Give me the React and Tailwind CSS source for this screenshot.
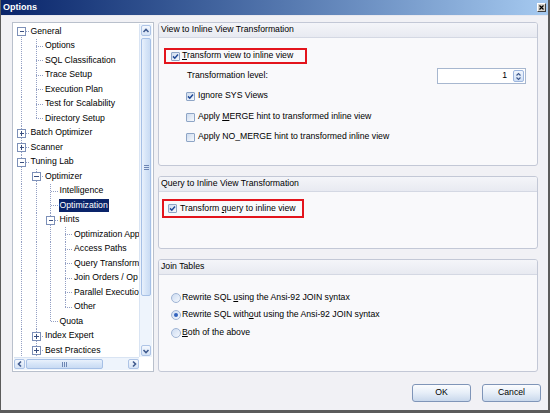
import React from 'react';

const FONT = "font-['Liberation_Sans',Arial,sans-serif]";

const leaf = (labels) => labels.map((label) => ({ label }));

const tree = [
  {
    label: 'General',
    open: true,
    children: leaf(['Options', 'SQL Classification', 'Trace Setup', 'Execution Plan', 'Test for Scalability', 'Directory Setup']),
  },
  { label: 'Batch Optimizer', closed: true },
  { label: 'Scanner', closed: true },
  {
    label: 'Tuning Lab',
    open: true,
    more: true,
    children: [
      {
        label: 'Optimizer',
        open: true,
        children: [
          { label: 'Intelligence' },
          { label: 'Optimization', selected: true },
          {
            label: 'Hints',
            open: true,
            children: leaf(['Optimization App', 'Access Paths', 'Query Transform', 'Join Orders / Op', 'Parallel Executio', 'Other']),
          },
          { label: 'Quota' },
        ],
      },
      { label: 'Index Expert', closed: true },
      { label: 'Best Practices', closed: true },
    ],
  },
];

function flatten(nodes, level, cont, more, out) {
  nodes.forEach((n, i) => {
    const last = i === nodes.length - 1 && !more;
    out.push({ ...n, level, cont, last, first: level === 0 && i === 0 });
    if (n.open) flatten(n.children, level + 1, [...cont, !last], n.more, out);
  });
  return out;
}

const rows = flatten(tree, 0, [], true, []);

const LINE = '#94a0c4';

function TreeRow({ r }) {
  const w = 15.5 + 14.5 * r.level;
  const cx = (i) => 7.5 + 14.5 * i;
  const mid = 7.25;
  const x = cx(r.level);
  return (
    <div className="h-[14.5px] flex items-center whitespace-nowrap">
      <svg width={w} height="14.5" className="shrink-0" shapeRendering="crispEdges">
        {r.cont.map((c, i) =>
          c ? <line key={i} x1={cx(i)} y1="0" x2={cx(i)} y2="14.5" stroke={LINE} strokeDasharray="1 1" /> : null
        )}
        <line x1={x} y1={r.first ? mid : 0} x2={x} y2={r.last ? mid : 14.5} stroke={LINE} strokeDasharray="1 1" />
        <line x1={x} y1={mid} x2={w} y2={mid} stroke={LINE} strokeDasharray="1 1" />
        {(r.open || r.closed) && (
          <g>
            <rect x={x - 4} y={mid - 4} width="8" height="8" fill="#fff" stroke="#7d90b8" />
            <line x1={x - 2} y1={mid} x2={x + 2.5} y2={mid} stroke="#3a4f80" />
            {r.closed && <line x1={x} y1={mid - 2} x2={x} y2={mid + 2.5} stroke="#3a4f80" />}
          </g>
        )}
      </svg>
      <span className={`px-[1px] leading-[13px] ${r.selected ? 'bg-[#0a246a] text-white' : 'text-black'}`}>{r.label}</span>
    </div>
  );
}

function Arrow({ dir }) {
  const d = {
    up: 'M1.5 5 L4 2.5 L6.5 5',
    down: 'M1.5 3 L4 5.5 L6.5 3',
    left: 'M5 1.5 L2.5 4 L5 6.5',
    right: 'M3 1.5 L5.5 4 L3 6.5',
  }[dir];
  return (
    <svg width="8" height="8" viewBox="0 0 8 8">
      <path d={d} fill="none" stroke="#3f5a8e" strokeWidth="1.6" />
    </svg>
  );
}

const SBTN = 'border border-[#aec4e6] rounded-[2px] flex items-center justify-center';

function VScroll() {
  return (
    <div className="flex flex-col bg-[#eef4fc] border-l border-[#d9e4f3] px-[1px] py-[1px]">
      <div className={`${SBTN} h-[11px] bg-gradient-to-b from-[#f4f8fe] to-[#d5e3f6]`}>
        <Arrow dir="up" />
      </div>
      <div className="mt-[2px] h-[258px] rounded-[2px] border border-[#a6c0e6] bg-gradient-to-r from-[#e9f1fc] via-[#d6e5f8] to-[#c9dbf3] flex flex-col items-center justify-center gap-[1px]">
        <span className="w-[5px] h-[1px] bg-[#6d86b4]" />
        <span className="w-[5px] h-[1px] bg-[#6d86b4]" />
        <span className="w-[5px] h-[1px] bg-[#6d86b4]" />
      </div>
      <div className="flex-1" />
      <div className={`${SBTN} h-[11px] bg-gradient-to-b from-[#f4f8fe] to-[#d5e3f6]`}>
        <Arrow dir="down" />
      </div>
    </div>
  );
}

function HScroll() {
  return (
    <div className="flex bg-[#eef4fc] border-t border-[#d9e4f3] py-[1px]">
      <div className={`${SBTN} w-[11px] bg-gradient-to-b from-[#f4f8fe] to-[#d5e3f6]`}>
        <Arrow dir="left" />
      </div>
      <div className="ml-[1px] w-[77px] rounded-[2px] border border-[#a6c0e6] bg-gradient-to-b from-[#e9f1fc] via-[#d6e5f8] to-[#c9dbf3] flex items-center justify-center gap-[1px]">
        <span className="w-[1px] h-[5px] bg-[#6d86b4]" />
        <span className="w-[1px] h-[5px] bg-[#6d86b4]" />
        <span className="w-[1px] h-[5px] bg-[#6d86b4]" />
      </div>
      <div className="flex-1" />
      <div className={`${SBTN} w-[11px] bg-gradient-to-b from-[#f4f8fe] to-[#d5e3f6]`}>
        <Arrow dir="right" />
      </div>
    </div>
  );
}

function Check({ checked }) {
  return (
    <span className="w-[9px] h-[9px] shrink-0 border border-[#8ea5c6] rounded-[1px] bg-gradient-to-br from-[#cfdcee] to-[#f6f9fd] flex items-center justify-center">
      {checked && (
        <svg width="7" height="7" viewBox="0 0 7 7">
          <path d="M1 3.4 L2.8 5.2 L6 1.6" fill="none" stroke="#1f4896" strokeWidth="1.5" />
        </svg>
      )}
    </span>
  );
}

function Radio({ on }) {
  return (
    <span className="w-[10px] h-[10px] shrink-0 rounded-full border border-[#9fb4d4] bg-gradient-to-br from-[#cddcf1] to-[#f5f8fd] flex items-center justify-center">
      {on && <span className="w-[4px] h-[4px] rounded-full bg-[#3262bd]" />}
    </span>
  );
}

function Group({ title, className, children }) {
  return (
    <div className={`border border-[#c3c8d6] rounded-[3px] bg-[#f9f9fb] flex flex-col overflow-hidden ${className}`}>
      <div className="h-[15px] shrink-0 bg-gradient-to-b from-[#f4f5f9] to-[#e8eaf1] border-b border-[#d4d8e3] px-[2px] flex items-center">
        {title}
      </div>
      <div className="flex-1 flex flex-col">{children}</div>
    </div>
  );
}

function Button({ children }) {
  return (
    <div className="w-[59px] h-[18px] rounded-[3px] border border-[#7f95b8] bg-gradient-to-b from-[#fbfcfe] via-[#e6eef8] to-[#c9d8ec] flex items-center justify-center text-black">
      {children}
    </div>
  );
}

export default function App() {
  return (
    <div className={`${FONT} text-[8.7px] text-black w-[550px] h-[413px] bg-[#f1f1f5] border-l border-r-2 border-b-[3px] border-[#5b5b5b] flex flex-col overflow-hidden`}>
      <div className="h-[16px] shrink-0 bg-gradient-to-r from-[#0a246a] to-[#a6caf0] flex items-center pl-[2px] pr-[2px] border-b border-[#e9e9ef]">
        <span className="text-white font-bold text-[9px]">Options</span>
        <div className="ml-auto w-[9px] h-[9px] bg-[#d4d0c8] border border-t-white border-l-white border-r-[#404040] border-b-[#404040] flex items-center justify-center">
          <svg width="5" height="5" viewBox="0 0 5 5">
            <path d="M0.5 0.5 L4.5 4.5 M4.5 0.5 L0.5 4.5" stroke="#000" strokeWidth="1.2" />
          </svg>
        </div>
      </div>

      <div className="flex-1 flex flex-col pl-[11px] pr-[10px] pt-[6px]">
        <div className="h-[350px] flex gap-[4px]">
          <div className="w-[142px] h-full border border-[#b9c0cc] bg-white p-[1px] grid grid-cols-[1fr_13px] grid-rows-[1fr_13px]">
            <div className="overflow-hidden">
              {rows.map((r, i) => (
                <TreeRow key={i} r={r} />
              ))}
            </div>
            <VScroll />
            <HScroll />
            <div className="bg-white" />
          </div>

          <div className="flex-1 flex flex-col">
            <Group title="View to Inline View Transformation" className="h-[144px]">
              <div className="mt-[10px] ml-[5px] w-[143px] h-[16px] border-2 border-[#e3141c] flex items-center pl-[5px] gap-[2px]">
                <Check checked />
                <span>
                  <u>T</u>ransform view to inline view
                </span>
              </div>
              <div className="mt-[4px] h-[16px] pl-[28px] pr-[11px] flex items-center">
                <span>Transformation level:</span>
                <div className="ml-auto w-[89px] h-[16px] border border-[#a7b7cf] bg-white flex items-center">
                  <span className="flex-1 text-right pr-[6px]">1</span>
                  <div className="w-[11px] h-[12px] mr-[1px] rounded-[2px] border border-[#9db6de] bg-gradient-to-b from-[#f1f6fd] to-[#cfdff5] flex flex-col items-center justify-center">
                    <svg width="7" height="9" viewBox="0 0 7 9">
                      <path d="M1.5 3.5 L3.5 1.5 L5.5 3.5 M1.5 5.5 L3.5 7.5 L5.5 5.5" fill="none" stroke="#3f5a8e" strokeWidth="1.1" />
                    </svg>
                  </div>
                </div>
              </div>
              <div className="mt-[5px] h-[14px] pl-[27px] flex items-center gap-[3px]">
                <Check checked />
                <span>Ignore SYS Views</span>
              </div>
              <div className="mt-[7px] h-[14px] pl-[27px] flex items-center gap-[3px]">
                <Check />
                <span>
                  Apply <u>M</u>ERGE hint to transformed inline view
                </span>
              </div>
              <div className="mt-[6px] h-[14px] pl-[27px] flex items-center gap-[3px]">
                <Check />
                <span>Apply NO_MERGE hint to transformed inline view</span>
              </div>
            </Group>

            <Group title="Query to Inline View Transformation" className="mt-[10px] h-[73px]">
              <div className="mt-[7px] ml-[3px] w-[142px] h-[19px] border-2 border-[#e3141c] flex items-center pl-[4px] gap-[3px]">
                <Check checked />
                <span>
                  Transform <u>q</u>uery to inline view
                </span>
              </div>
            </Group>

            <Group title="Join Tables" className="mt-[10px] flex-1">
              <div className="mt-[16px] h-[14px] pl-[12px] flex items-center gap-[1px]">
                <Radio />
                <span>
                  Rewrite SQL <u>u</u>sing the Ansi-92 JOIN syntax
                </span>
              </div>
              <div className="mt-[3px] h-[14px] pl-[12px] flex items-center gap-[1px]">
                <Radio on />
                <span>
                  Rewrite SQL with<u>o</u>ut using the Ansi-92 JOIN syntax
                </span>
              </div>
              <div className="mt-[4px] h-[14px] pl-[12px] flex items-center gap-[1px]">
                <Radio />
                <span>
                  <u>B</u>oth of the above
                </span>
              </div>
            </Group>
          </div>
        </div>

        <div className="mt-[12px] flex justify-end gap-[11px] -mr-[3px]">
          <Button>OK</Button>
          <Button>Cancel</Button>
        </div>
      </div>
    </div>
  );
}
